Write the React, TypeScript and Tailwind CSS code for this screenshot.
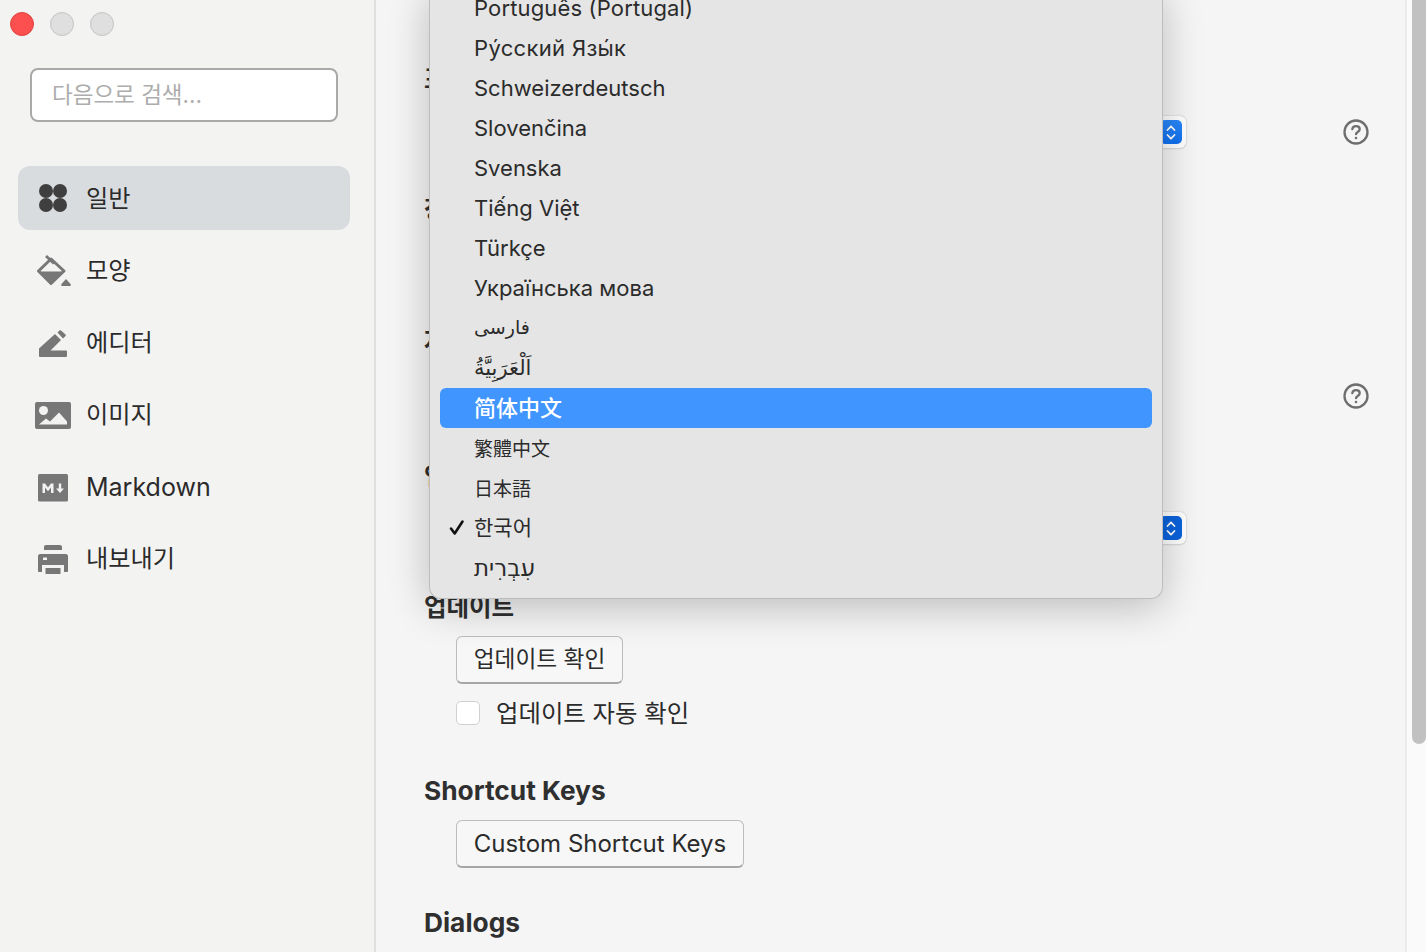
import React from "react";

const BASE = "font-['Inter','Noto_Sans_CJK_KR','Noto_Sans','DejaVu_Sans',sans-serif]";

const langs: { label: string; selected?: boolean; checked?: boolean; cls?: string }[] = [
  { label: "Português (Portugal)", cls: "tracking-[0.15px]" },
  { label: "Ру́сский Язы́к", cls: "tracking-[0.33px]" },
  { label: "Schweizerdeutsch" },
  { label: "Slovenčina" },
  { label: "Svenska" },
  { label: "Tiếng Việt" },
  { label: "Türkçe" },
  { label: "Українська мова" },
  { label: "فارسی", cls: "text-[19px]" },
  { label: "اَلْعَرَبِيَّةُ", cls: "text-[21px]" },
  { label: "简体中文", selected: true, cls: "text-[22px] font-['Inter','Noto_Sans_CJK_SC',sans-serif]" },
  { label: "繁體中文", cls: "text-[19px] pt-1 font-['Inter','Noto_Sans_CJK_TC',sans-serif]" },
  { label: "日本語", cls: "text-[19px] pt-1 font-['Inter','Noto_Sans_CJK_JP',sans-serif]" },
  { label: "한국어", checked: true, cls: "text-[21px]" },
  { label: "עִבְרִית", cls: "text-[23px]" },
];

function Dots() {
  return (
    <svg width="30" height="30" viewBox="0 0 30 30" fill="#3f3f3f">
      <circle cx="8" cy="8" r="7" />
      <circle cx="22" cy="8" r="7" />
      <circle cx="8" cy="22" r="7" />
      <circle cx="22" cy="22" r="7" />
    </svg>
  );
}
function Bucket() {
  return (
    <svg width="36" height="32" viewBox="0 0 36 32">
      <path d="M2.500 16L15 4l13 12-13 12.500z" fill="none" stroke="#777" strokeWidth="3" strokeLinejoin="round" />
      <path d="M4 16.500h23L15 28z" fill="#777" />
      <path d="M10 1l8 7.500" fill="none" stroke="#777" strokeWidth="2.800" />
      <path d="M30 24l4.500 5q1 2-1 2h-7q-2 0-1-2z" fill="#777" />
    </svg>
  );
}
function Pen() {
  return (
    <svg width="30" height="28" viewBox="0 0 30 28" fill="#777">
      <path d="M1 18.500L17 4l6 6-10.500 10.500H28c.5 0 1 .5 1 1V26c0 .5-.5 1-1 1H2c-.5 0-1-.5-1-1z" />
      <path d="M19.500 2.500L21.500.5c.5-.5 1-.5 1.500 0l4.500 4c.5.5.5 1 0 1.500L25 8.500z" />
    </svg>
  );
}
function Picture() {
  return (
    <svg width="36" height="28" viewBox="0 0 36 28">
      <rect width="36" height="27" rx="2" fill="#777" />
      <circle cx="8.500" cy="8.500" r="4.500" fill="#f3f3f2" />
      <path d="M4 22.500l7-6 4 3 9-9 8 9v3z" fill="#f3f3f2" />
    </svg>
  );
}
function Md() {
  return (
    <svg width="30" height="28" viewBox="0 0 30 28">
      <rect width="30" height="27.500" rx="1.500" fill="#777" />
      <path d="M4.500 19V9.500h2.500l3 4 3-4h2.500V19h-2.500v-5.500l-3 3.800-3-3.800V19z" fill="#f3f3f2" />
      <path d="M20.800 9.500h2.400v5h2.800L22 19l-4-4.500h2.800z" fill="#f3f3f2" />
    </svg>
  );
}
function Printer() {
  return (
    <svg width="30" height="29" viewBox="0 0 30 29" fill="#777">
      <path d="M6 2a2 2 0 0 1 2-2h14a2 2 0 0 1 2 2v3H6z" />
      <path d="M2 9h26c1 0 2 1 2 2v15c0 .5-.5 1-1 1h-3v-7H4v7H1c-.5 0-1-.5-1-1V11c0-1 1-2 2-2zm3 3.500v2.500h4v-2.500z" fillRule="evenodd" />
      <rect x="7.500" y="23" width="15" height="6" />
    </svg>
  );
}

const nav = [
  { icon: <Dots />, label: "일반", y: "h-16 bg-[#d9dcdf] mt-[44px]", iconBox: "pl-[20px]", gap: "w-[48px]", text: "text-[24.200px] mt-[3px]" },
  { icon: <Bucket />, label: "모양", y: "h-16 mt-2", iconBox: "pl-[18px] [&>div>svg]:mt-[2px]", gap: "w-[50px]", text: "text-[24.200px] mt-[3px]" },
  { icon: <Pen />, label: "에디터", y: "h-16 mt-2", iconBox: "pl-[20px] [&>div>svg]:mt-1", gap: "w-[48px]", text: "text-[24.200px] mt-[3px]" },
  { icon: <Picture />, label: "이미지", y: "h-16 mt-2", iconBox: "pl-[17px] [&>div>svg]:mt-1", gap: "w-[51px]", text: "text-[24.200px] mt-[3px]" },
  { icon: <Md />, label: "Markdown", y: "h-16 mt-[9px]", iconBox: "pl-[20px] [&>div>svg]:mt-[2px]", gap: "w-[48px]", text: "text-[25px] mt-[2px]" },
  { icon: <Printer />, label: "내보내기", y: "h-16 mt-[7px]", iconBox: "pl-[20px] [&>div>svg]:mt-[2px]", gap: "w-[48px]", text: "text-[24.200px] mt-[3px]" },
];

function Help() {
  return (
    <svg width="26" height="26" viewBox="0 0 26 26" fill="none" stroke="#6e6e6e" strokeWidth="2.300" strokeLinecap="round">
      <circle cx="13" cy="13" r="11.500" />
      <path d="M9.300 10.200c.3-2 1.800-3 3.700-3 2.200 0 3.700 1.300 3.700 3 0 2.800-3.700 2.600-3.700 5" />
      <circle cx="13" cy="19" r=".6" fill="#6e6e6e" strokeWidth="1.400" />
    </svg>
  );
}

function Stepper({ pressed }: { pressed?: boolean }) {
  return (
    <div className="w-[30px] h-[32px] rounded-md bg-white shadow-[0_0_2px_rgba(0,0,0,0.22),0_1px_2px_rgba(0,0,0,0.08)] flex items-center justify-end pr-[4px]">
      <div className={`w-[22px] h-[24px] rounded-[5px] flex items-center justify-center ${pressed ? "bg-[#0a63dd]" : "bg-gradient-to-b from-[#2a88fa] to-[#0f70f0]"}`}>
        <svg width="10" height="17" viewBox="0 0 10 17" fill="none" stroke="#fff" strokeWidth="1.800" strokeLinecap="round" strokeLinejoin="round">
          <path d="M1.500 6L5 2.300 8.500 6" />
          <path d="M1.500 11L5 14.700 8.500 11" />
        </svg>
      </div>
    </div>
  );
}

function Row({ select, pressed, help, className }: { select?: boolean; pressed?: boolean; help?: boolean; className: string }) {
  return (
    <div className={`flex h-10 items-center justify-end gap-[157px] ${className}`}>
      {select && <Stepper pressed={pressed} />}
      {help ? <Help /> : <div className="w-[26px]" />}
    </div>
  );
}

function Btn({ children, w, text }: { children: React.ReactNode; w: string; text: string }) {
  return (
    <button className={`${w} ${text} ml-8 h-12 rounded-md border border-[#bcbcbc] border-b-2 border-b-[#a6a6a6] bg-[#f7f7f7] text-[#2b2b2b] leading-none text-center block`}>
      {children}
    </button>
  );
}

function Heading({ children, ko }: { children: React.ReactNode; ko?: boolean }) {
  return <h2 className={`h-8 leading-8 font-bold text-[#2f2f2f] ${ko ? "text-[24.500px] pt-px" : "text-[26.300px]"}`}>{children}</h2>;
}

export default function App() {
  return (
    <div className={`relative flex h-[952px] w-[1426px] overflow-hidden bg-[#f5f5f5] ${BASE}`}>
      <aside className="w-[376px] shrink-0 h-full bg-[#f3f3f2] border-r-2 border-[#dfdfdf] px-[18px]">
        <div className="flex gap-[16px] pt-3 -ml-2">
          <span className="w-6 h-6 rounded-full bg-[#fc4f4f] border border-[#e0443f]" />
          <span className="w-6 h-6 rounded-full bg-[#dfdfdf] border border-[#c4c4c4]" />
          <span className="w-6 h-6 rounded-full bg-[#dfdfdf] border border-[#c4c4c4]" />
        </div>
        <div className="mt-[32px] ml-3 w-[308px] h-[54px] rounded-lg border-2 border-[#a9a9a9] bg-white flex items-center pl-5 text-[22.500px] text-[#adadad]">
          다음으로 검색...
        </div>
        {nav.map((n) => (
          <div key={n.label} className={`${n.y} w-[332px] rounded-xl flex items-center text-[#2b2b2b] ${n.iconBox}`}>
            <div className={`${n.gap} flex items-center shrink-0`}>{n.icon}</div>
            <span className={n.text}>{n.label}</span>
          </div>
        ))}
      </aside>

      <main className="flex-1 min-w-0 h-full pl-[48px] pr-[36px] pt-[62px] border-r-2 border-[#ebebeb]">
        <section className="h-[130px]">
          <Heading ko>표시</Heading>
          <Row select help className="mt-[18px]" />
        </section>
        <section className="h-[132px]">
          <Heading ko>창</Heading>
        </section>
        <section className="h-[135px]">
          <Heading ko>자동 저장</Heading>
          <Row help className="mt-5" />
        </section>
        <section className="h-[131px]">
          <Heading ko>언어</Heading>
          <Row select pressed className="mt-[17px]" />
        </section>
        <Heading ko>업데이트</Heading>
        <div className="mt-[14px]"><Btn w="w-[167px]" text="text-[22.700px]">업데이트 확인</Btn></div>
        <div className="ml-8 mt-3 pt-px flex items-center gap-4 text-[24.400px] leading-8 text-[#2b2b2b]">
          <span className="w-6 h-6 rounded-[5px] border border-[#d0d0d0] bg-white shrink-0" />
          <span>업데이트 자동 확인</span>
        </div>
        <div className="mt-[46px]"><Heading>Shortcut Keys</Heading></div>
        <div className="mt-[13px]"><Btn w="w-[288px]" text="text-[24px]">Custom Shortcut Keys</Btn></div>
        <div className="mt-[39px]"><Heading>Dialogs</Heading></div>
      </main>

      <div className="w-[19px] shrink-0 h-full bg-[#fafafa] flex justify-end">
        <div className="w-[14px] h-[744px] bg-[#c1c1c1] rounded-b-lg" />
      </div>

      <div className="absolute left-[429px] bottom-[353px] w-[734px] rounded-b-xl border border-[#bdbdbd] border-t-0 bg-[#e5e5e5] px-[10px] pb-[10px] shadow-[0_8px_40px_rgba(0,0,0,0.24)] text-[#2b2b2b] text-[22px]">
        {langs.map((l) => (
          <div key={l.label} className={`relative h-10 rounded-md pl-[34px] flex items-center ${l.selected ? "bg-[#4095ff] text-white font-medium" : ""} ${l.cls ?? ""}`}>
            {l.checked && (
              <svg className="absolute left-[8px] top-[11px]" width="18" height="18" viewBox="0 0 18 18" fill="none" stroke="#111" strokeWidth="2.600" strokeLinecap="round" strokeLinejoin="round">
                <path d="M3 9.500l3.700 5L14.500 2.500" />
              </svg>
            )}
            <span>{l.label}</span>
          </div>
        ))}
      </div>
    </div>
  );
}
